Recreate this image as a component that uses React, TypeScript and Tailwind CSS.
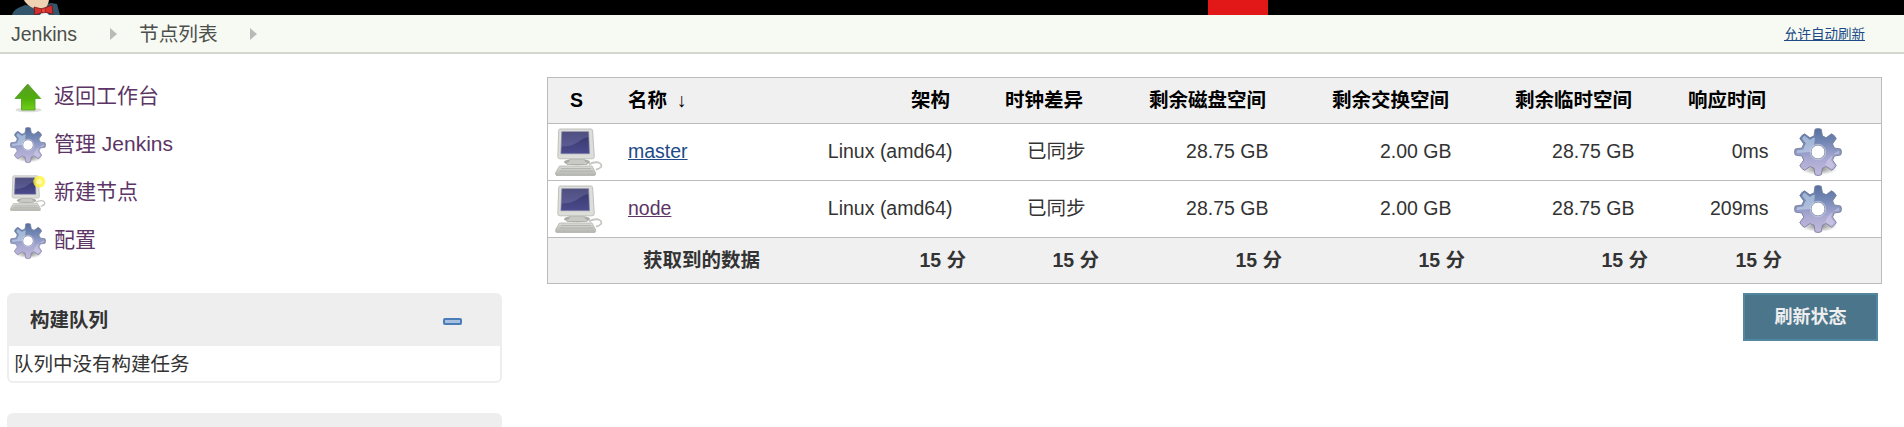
import React from 'react';

const font = "font-['Liberation_Sans','Noto_Sans_CJK_SC',sans-serif]";

function Gear({ className }: { className: string }) {
  return (
    <svg viewBox="0 0 48 48" className={className}>
      <defs>
        <linearGradient id="gearFill" x1="0" y1="0" x2="0" y2="1">
          <stop offset="0" stopColor="#57709f" />
          <stop offset=".3" stopColor="#7588b5" />
          <stop offset=".65" stopColor="#a9a9d2" />
          <stop offset="1" stopColor="#c6b8dc" />
        </linearGradient>
        <radialGradient id="gearShade">
          <stop offset="0" stopColor="#000" stopOpacity=".5" />
          <stop offset="1" stopColor="#000" stopOpacity="0" />
        </radialGradient>
      </defs>
      <ellipse cx="25" cy="41" rx="18" ry="6" fill="url(#gearShade)" />
      <path
        fillRule="evenodd"
        d="M21 1.200Q24 0 27.200 1.200L28.500 8Q30.500 8.600 32 9.800L37.500 5.800Q40.500 7 42.300 10.500L38.500 16Q39.800 18 40.200 20L46.700 21Q48.200 24 46.700 27L40.200 28Q39.800 30 38.500 32L42.300 37.500Q40.500 41 37.500 42.300L32 38.500Q30.300 39.700 28.500 40.200L27.200 46.800Q24 48.200 21 46.800L20 40.200Q17.800 39.700 16 38.500L10.500 42.300Q7.500 41 5.800 37.500L9.800 32Q8.500 30 8 28L1.200 27Q0 24 1.200 21L8 20Q8.500 18 9.800 16L5.800 10.500Q7.500 7 10.500 5.800L16 9.800Q18 8.600 20 8ZM24 17A7 7 0 1 0 24 31A7 7 0 1 0 24 17Z"
        fill="url(#gearFill)"
        stroke="#747f9d"
        strokeWidth=".9"
      />
      <path d="M8.500 11.500Q7.500 10 10.500 7.500L16 12Q18 9.500 21 9.500L20 18Q16.500 21 17 24L3 25V22.500L9.500 21.500Q10 17.500 12 15.500Z" fill="#c5d8ee" opacity=".6" />
      <path d="M31 37Q34 29 45 22.500V25.500L39 26.500L36.800 32L40.500 37.500L37.500 40.500Z" fill="#dcd8f0" opacity=".45" />
      <circle cx="24" cy="24" r="7.700" fill="none" stroke="#d6dae9" strokeWidth=".8" opacity=".8" />
    </svg>
  );
}

function Computer({ className, isNew = false }: { className: string; isNew?: boolean }) {
  return (
    <svg viewBox="0 0 48 48" className={className}>
      <defs>
        <linearGradient id="screenFill" x1="0" y1="0" x2="0" y2="1">
          <stop offset="0" stopColor="#343468" />
          <stop offset="1" stopColor="#4c4c8e" />
        </linearGradient>
        <linearGradient id="baseFill" x1="0" y1="0" x2="0" y2="1">
          <stop offset="0" stopColor="#dcddd8" />
          <stop offset="1" stopColor="#b3b4ae" />
        </linearGradient>
      </defs>
      <path d="M34 36.500Q39 33.500 43.500 34.500Q47.500 36 46 39Q44.500 41 41 41.500" fill="none" stroke="#c6c7c3" strokeWidth="1.800" />
      <ellipse cx="22" cy="34" rx="13" ry="3.300" fill="#8e908a" opacity=".75" />
      <path d="M15 31H29L30.500 33.500Q34 34.500 32 36.500H12Q10 34.500 14 33.500Z" fill="#c9cac5" stroke="#a2a49e" strokeWidth=".6" />
      <path d="M5 1H36Q37.500 1 37.600 2.500L39.300 28.500Q39.300 30.800 37 30.800H5Q2.700 30.800 2.800 28.500L3.700 2.500Q3.800 1 5 1Z" fill="#dddeda" stroke="#babbb6" strokeWidth=".9" />
      <path d="M6.800 3.700H33.600L34.500 25.700H5.900Z" fill="url(#screenFill)" stroke="#8787a5" strokeWidth=".7" />
      <path d="M7.200 4.200H33.200V9Q28 10 23 14Q17 18.500 6.600 18.500Z" fill="#d5d8fa" opacity=".17" />
      <path d="M4.500 38H37L40.500 44.500V46.500Q40.500 47.500 39 47.500H2Q.7 47.500 .7 46.500V44.500Z" fill="url(#baseFill)" stroke="#b1b2ac" strokeWidth=".8" />
      <path d="M6 40.500H36M4.500 43H38" stroke="#a8aaa4" strokeWidth=".7" />
      {isNew && (
        <>
          <circle cx="39" cy="9" r="8" fill="#fff43a" opacity=".8" />
          <circle cx="39" cy="9" r="3.500" fill="#fffbb5" />
        </>
      )}
    </svg>
  );
}

function UpArrow() {
  return (
    <svg viewBox="0 0 36 36" className="size-9">
      <defs>
        <linearGradient id="arrowFill" x1="0" y1="0" x2="0" y2="1">
          <stop offset="0" stopColor="#5d9b2c" />
          <stop offset=".55" stopColor="#4fae0b" />
          <stop offset="1" stopColor="#70d016" />
        </linearGradient>
      </defs>
      <ellipse cx="18.500" cy="31" rx="13" ry="2.300" fill="#000" opacity=".13" />
      <path d="M17.700 5L30.700 19.500H25V31H11.500V19.500H5Z" fill="url(#arrowFill)" stroke="#55a02a" strokeWidth=".9" strokeLinejoin="round" />
    </svg>
  );
}

function Mascot() {
  return (
    <svg viewBox="0 0 52 15" className="ml-[11px] h-[15px] w-[52px]">
      <path d="M1 15Q2 11 7 8L14 5L25 7L40 3L46 4L49 15Z" fill="#34566c" />
      <path d="M13 0H38Q37 7 32 10L24 9Q15 5 13 0Z" fill="#efd2b3" />
      <path d="M29 15L33 9L38 15Z" fill="#f3f3f3" />
      <path d="M23 7L31 9L41 5L42 14L33 12L24 15Z" fill="#d72f2d" stroke="#6c1715" strokeWidth=".8" />
      <path d="M30.500 8.500L34 8L34.500 12.500L31 13Z" fill="#ed4a45" stroke="#6c1715" strokeWidth=".6" />
    </svg>
  );
}

function Separator() {
  return (
    <svg viewBox="0 0 7 12" className="h-3 w-[7px]">
      <path d="M0 0L7 6L0 12Z" fill="#b9bbb8" />
    </svg>
  );
}

const tasks = [
  { label: '返回工作台', icon: <UpArrow /> },
  { label: '管理 Jenkins', icon: <Gear className="size-9" /> },
  { label: '新建节点', icon: <Computer className="size-9" isNew /> },
  { label: '配置', icon: <Gear className="size-9" /> },
];

const columns = ['架构', '时钟差异', '剩余磁盘空间', '剩余交换空间', '剩余临时空间', '响应时间'];

const nodes = [
  { name: 'master', color: 'text-[#204a87]', values: ['Linux (amd64)', '已同步', '28.75 GB', '2.00 GB', '28.75 GB', '0ms'] },
  { name: 'node', color: 'text-[#5c3566]', values: ['Linux (amd64)', '已同步', '28.75 GB', '2.00 GB', '28.75 GB', '209ms'] },
];

export default function App() {
  return (
    <div className={`h-[427px] w-[1904px] overflow-hidden bg-white text-[19.5px] leading-[26px] text-[#333] ${font}`}>
      <header className="flex h-[15px] bg-black">
        <Mascot />
        <div className="ml-[1145px] w-[60px] bg-[#e21818]" />
      </header>
      <nav className="flex h-[39px] items-center border-b-2 border-[#d3d7cf] bg-[#f6faf2] pl-[11px] text-[#4d4f4c]">
        <span className="w-[99px]">Jenkins</span>
        <Separator />
        <span className="ml-[22px] w-[111px] text-[19.7px]">节点列表</span>
        <Separator />
        <a className="mt-0.5 mr-[39px] ml-auto text-[13.5px] text-[#204a87] underline">允许自动刷新</a>
      </nav>
      <div className="flex">
        <aside className="w-[547px] pt-[19px] pl-[7px]">
          <ul className="pl-[3px]">
            {tasks.map((t) => (
              <li key={t.label} className="flex h-12 items-center text-[21px] text-[#5c3566]">
                {t.icon}
                <span className="-mt-[3px] ml-2">{t.label}</span>
              </li>
            ))}
          </ul>
          <section className="mt-7 w-[495px] rounded-md border-2 border-[#eee]">
            <div className="flex h-[51px] items-center justify-between bg-[#eee] pr-[38px] pb-[2px] pl-[21px] font-bold">
              <span>构建队列</span>
              <svg viewBox="0 0 19 7" className="mt-1 h-[7px] w-[19px]">
                <rect x="1" y="1" width="17" height="5" rx="1" fill="#a7c0df" stroke="#4c7cb8" strokeWidth="2" />
              </svg>
            </div>
            <div className="h-[35px] pt-[5px] pl-[5px]">队列中没有构建任务</div>
          </section>
          <section className="mt-[30px] h-16 w-[495px] rounded-md bg-[#eee]" />
        </aside>
        <main className="w-[1335px] pt-[23px]">
          <table className="w-[1335px] table-fixed border-separate border-spacing-0 border border-[#bbb] text-right">
            <colgroup>
              <col className="w-[60px]" />
              <col className="w-[192px]" />
              <col className="w-[168px]" />
              <col className="w-[133px]" />
              <col className="w-[183px]" />
              <col className="w-[183px]" />
              <col className="w-[183px]" />
              <col className="w-[134px]" />
              <col className="w-[97px]" />
            </colgroup>
            <thead>
              <tr className="h-[46px] bg-[#f0f0f0] text-black">
                <th className="border-b border-[#bbb] p-0 pr-[3px] pb-[2px] text-center">S</th>
                <th className="border-b border-[#bbb] p-0 pb-[2px] pl-5 text-left">
                  名称<span className="ml-[10px] font-normal">↓</span>
                </th>
                {columns.map((c) => (
                  <th key={c} className="border-b border-[#bbb] p-0 pr-[18px] pb-[2px]">{c}</th>
                ))}
                <th className="border-b border-[#bbb] p-0" />
              </tr>
            </thead>
            <tbody>
              {nodes.map((n) => (
                <tr key={n.name} className="h-[57px]">
                  <td className="border-b border-[#bbb] p-0 pl-[7px]">
                    <Computer className="size-12" />
                  </td>
                  <td className="border-b border-[#bbb] p-0 pb-[2px] pl-5 text-left">
                    <a className={`underline ${n.color}`}>{n.name}</a>
                  </td>
                  {n.values.map((v, i) => (
                    <td key={i} className="border-b border-[#bbb] p-0 pr-[15.5px] pb-[2px]">{v}</td>
                  ))}
                  <td className="border-b border-[#bbb] p-0 pl-[10px]">
                    <Gear className="size-12" />
                  </td>
                </tr>
              ))}
              <tr className="h-[45px] bg-[#f0f0f0] font-bold">
                <td className="p-0" />
                <td className="p-0 pb-[2px] pl-[35px] text-left">获取到的数据</td>
                {columns.map((c) => (
                  <td key={c} className="p-0 pr-[2px] pb-[2px]">15 分</td>
                ))}
                <td className="p-0" />
              </tr>
            </tbody>
          </table>
          <div className="flex justify-end pt-[9px] pr-1">
            <button className="h-12 w-[135px] border-2 border-[#5187a0] bg-[#4b758b] text-[18px] font-bold text-[#eee]">
              刷新状态
            </button>
          </div>
        </main>
      </div>
    </div>
  );
}
